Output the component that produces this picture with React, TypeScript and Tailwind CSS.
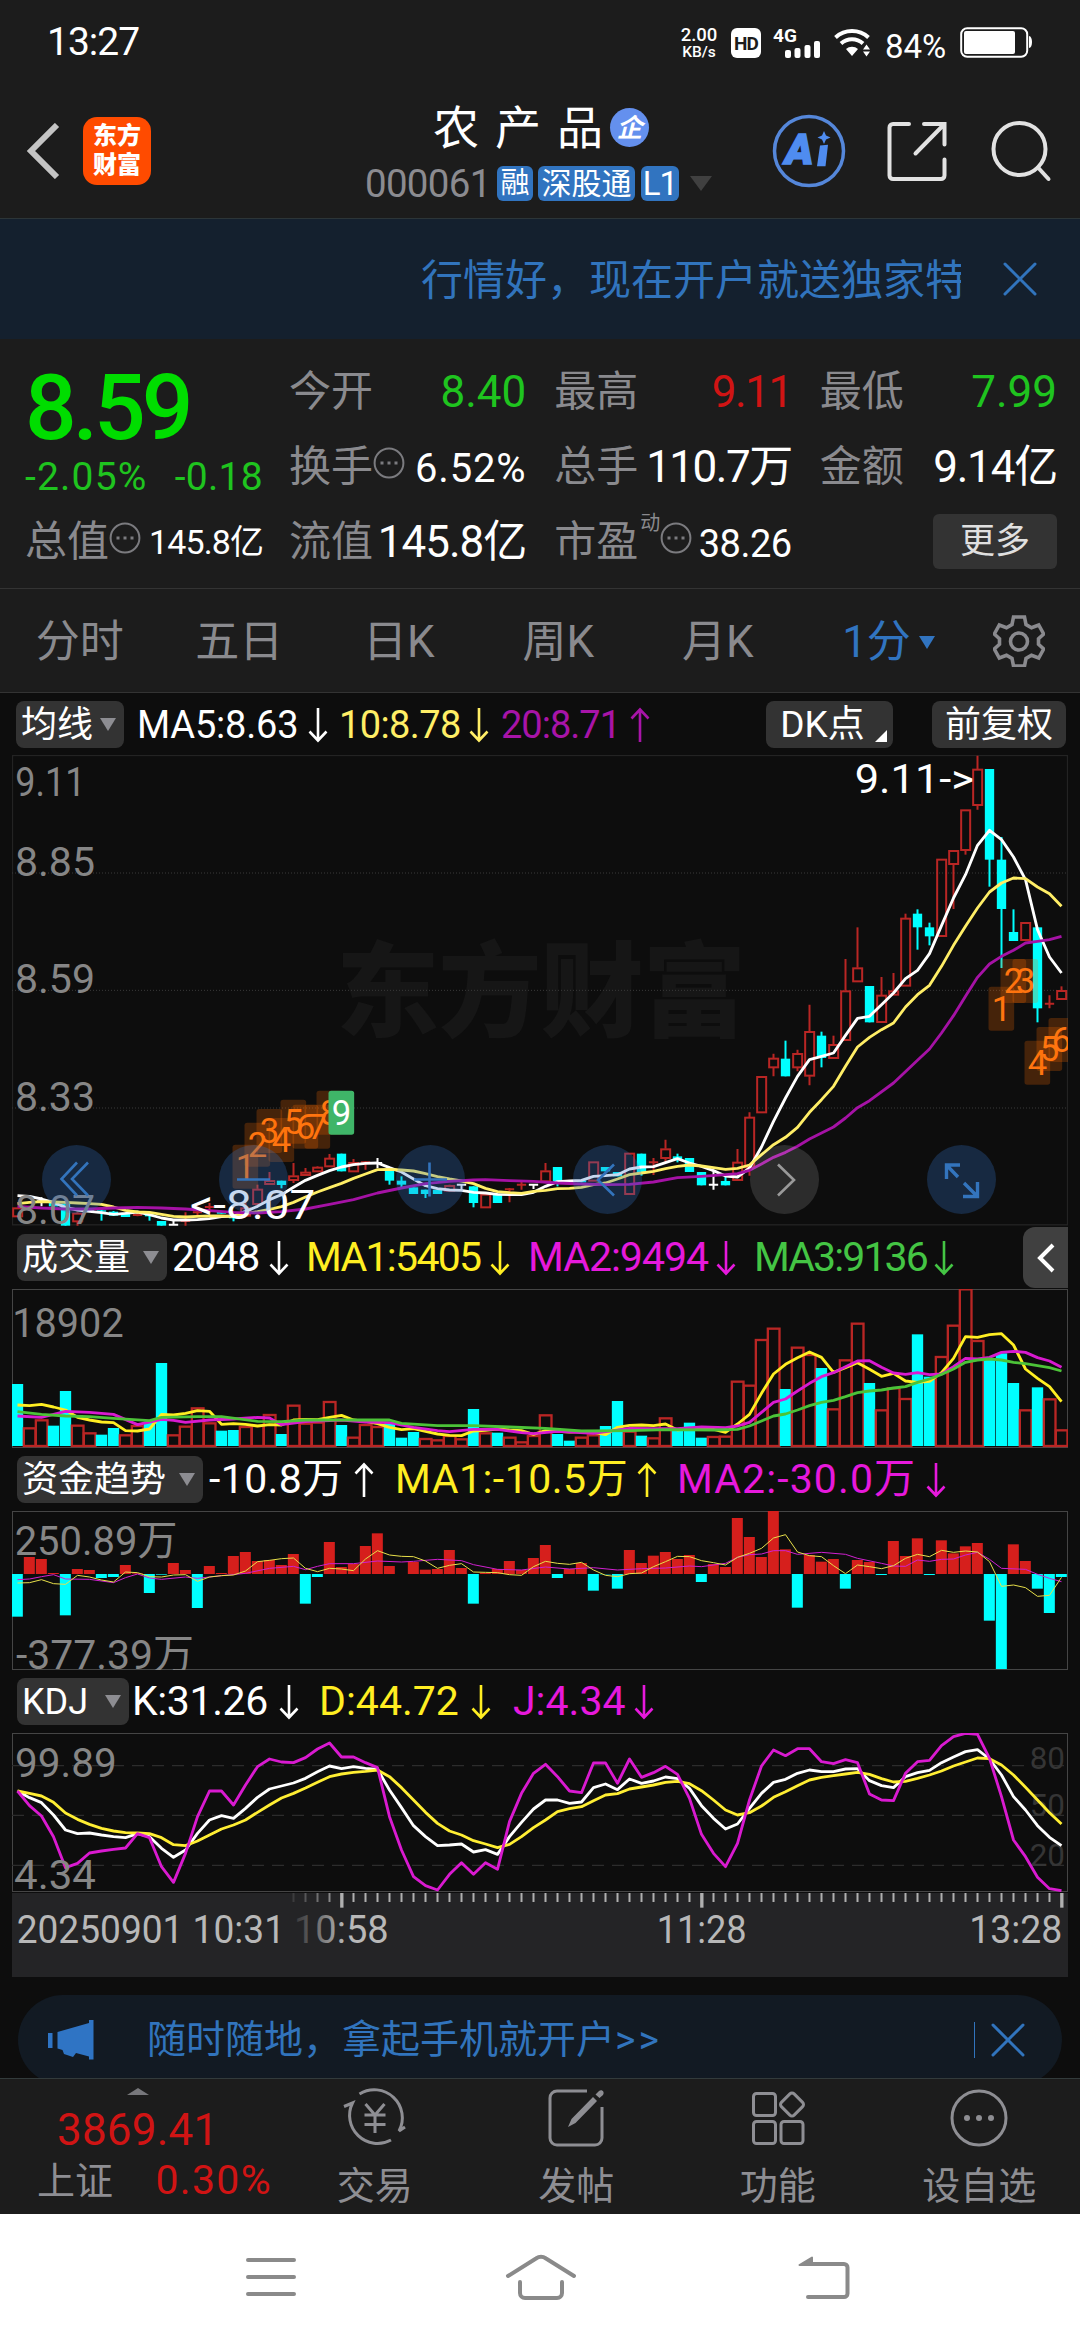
import { ReactNode } from 'react'
import clsx from 'clsx'

type Kind = 'up' | 'down' | 'flat'
type Candle = [kind: Kind, high: number, top: number, bottom: number, low: number]
type Point = [index: number, y: number]

// Every chart is drawn in a 3x space: one bar takes 36 units, 88 bars in total
const STEP = 36
const WIDTH = 3168
const cx = (i: number) => 16.5 + i * STEP

const UP = '#b92624'
const DOWN = '#00ffff'

const candles: Candle[] = [
  ['up', 1404, 1404, 1432, 1432], ['up', 1398, 1405, 1405, 1414], ['flat', 1373, 1385, 1385, 1400], ['down', 1385, 1388, 1400, 1400],
  ['down', 1390, 1392, 1458, 1458], ['up', 1418, 1420, 1447, 1458], ['down', 1410, 1412, 1416, 1416], ['down', 1408, 1412, 1416, 1443],
  ['down', 1414, 1416, 1428, 1428], ['down', 1418, 1420, 1432, 1432], ['up', 1420, 1426, 1426, 1430], ['down', 1420, 1424, 1430, 1443],
  ['down', 1444, 1444, 1458, 1458], ['flat', 1438, 1455, 1455, 1458], ['up', 1418, 1444, 1444, 1458], ['up', 1405, 1418, 1418, 1430],
  ['up', 1390, 1402, 1402, 1420], ['down', 1414, 1416, 1422, 1422], ['down', 1428, 1430, 1436, 1445], ['up', 1390, 1404, 1430, 1430],
  ['up', 1335, 1348, 1395, 1395], ['up', 1297, 1322, 1335, 1335], ['down', 1323, 1323, 1336, 1346], ['up', 1270, 1308, 1323, 1330],
  ['up', 1285, 1297, 1308, 1308], ['up', 1280, 1282, 1297, 1297], ['up', 1243, 1255, 1282, 1282], ['down', 1242, 1242, 1295, 1295],
  ['up', 1258, 1268, 1297, 1297], ['up', 1264, 1268, 1268, 1290], ['flat', 1255, 1270, 1270, 1285], ['down', 1293, 1293, 1323, 1335],
  ['down', 1310, 1323, 1335, 1348], ['down', 1343, 1343, 1363, 1363], ['down', 1350, 1350, 1363, 1375], ['down', 1350, 1350, 1363, 1363],
  ['up', 1335, 1337, 1355, 1355], ['flat', 1333, 1335, 1335, 1350], ['down', 1340, 1340, 1390, 1403], ['up', 1363, 1363, 1405, 1405],
  ['down', 1363, 1363, 1390, 1390], ['up', 1345, 1349, 1349, 1388], ['up', 1325, 1335, 1335, 1350], ['flat', 1333, 1335, 1335, 1348],
  ['up', 1270, 1293, 1327, 1327], ['down', 1282, 1282, 1325, 1340], ['down', 1322, 1322, 1328, 1328], ['down', 1322, 1322, 1328, 1328],
  ['up', 1266, 1266, 1325, 1325], ['down', 1282, 1282, 1295, 1295], ['down', 1297, 1297, 1310, 1310], ['up', 1240, 1240, 1365, 1365],
  ['down', 1242, 1242, 1300, 1308], ['up', 1255, 1268, 1268, 1306], ['up', 1200, 1227, 1257, 1268], ['down', 1242, 1250, 1258, 1268],
  ['down', 1255, 1255, 1297, 1297], ['down', 1297, 1297, 1337, 1337], ['flat', 1295, 1335, 1335, 1350], ['down', 1310, 1324, 1337, 1337],
  ['up', 1228, 1267, 1323, 1323], ['up', 1118, 1132, 1285, 1308], ['up', 1010, 1010, 1120, 1120], ['up', 942, 955, 985, 1010],
  ['down', 903, 957, 1010, 1010], ['up', 930, 941, 985, 995], ['up', 795, 875, 1010, 1037], ['down', 876, 888, 955, 983],
  ['up', 888, 914, 957, 957], ['up', 658, 753, 903, 903], ['up', 563, 684, 727, 727], ['down', 739, 739, 848, 848],
  ['up', 712, 766, 849, 849], ['up', 700, 753, 767, 767], ['up', 522, 535, 740, 740], ['down', 509, 522, 563, 630],
  ['down', 549, 563, 590, 617], ['up', 358, 358, 591, 591], ['up', 332, 332, 375, 508], ['up', 210, 210, 333, 345],
  ['up', 48, 88, 198, 210], ['down', 88, 88, 360, 441], ['down', 292, 360, 508, 685], ['down', 509, 577, 604, 604],
  ['up', 548, 548, 603, 603], ['down', 563, 563, 806, 848], ['up', 767, 792, 792, 806], ['up', 740, 752, 780, 780],
]

const ma5 = [
  1368, 1370, 1378, 1388, 1403, 1411, 1415, 1419, 1424, 1421, 1417, 1425, 1435, 1441, 1441, 1440, 1437, 1431, 1429, 1415, 1400, 1380,
  1365, 1343, 1322, 1307, 1293, 1282, 1275, 1271, 1270, 1284, 1297, 1318, 1338, 1347, 1351, 1352, 1358, 1360, 1364, 1365, 1365, 1358,
  1340, 1326, 1324, 1322, 1310, 1308, 1305, 1288, 1282, 1281, 1269, 1257, 1270, 1280, 1293, 1309, 1312, 1285, 1222, 1145, 1075, 1010,
  960, 950, 940, 887, 836, 830, 795, 760, 717, 692, 642, 558, 475, 405, 317, 272, 300, 352, 420, 570, 652, 700,
]
const ma10 = [
  1392, 1388, 1386, 1387, 1388, 1390, 1392, 1394, 1402, 1412, 1417, 1418, 1424, 1430, 1432, 1430, 1429, 1429, 1430, 1422, 1416, 1409,
  1401, 1388, 1372, 1357, 1344, 1331, 1316, 1303, 1290, 1289, 1291, 1294, 1302, 1311, 1318, 1324, 1332, 1346, 1356, 1359, 1361, 1355,
  1352, 1347, 1346, 1343, 1335, 1330, 1318, 1305, 1300, 1295, 1287, 1280, 1276, 1279, 1284, 1289, 1286, 1276, 1245, 1215, 1193, 1163,
  1118, 1080, 1040, 980, 922, 893, 870, 850, 802, 765, 737, 680, 617, 560, 505, 457, 430, 415, 417, 442, 462, 500,
]
const ma20: Point[] = [
  [0, 1400], [2, 1405], [4, 1408], [6, 1408], [8, 1405], [10, 1403], [12, 1405], [14, 1408], [16, 1413], [18, 1418], [20, 1420],
  [22, 1416], [24, 1408], [26, 1394], [28, 1380], [30, 1360], [32, 1345], [34, 1332], [36, 1325], [38, 1321], [39, 1320], [41, 1323],
  [43, 1325], [45, 1330], [47, 1333], [49, 1335], [51, 1334], [53, 1327], [55, 1314], [57, 1310], [59, 1305], [60, 1302], [61, 1292],
  [62, 1273], [63, 1253], [64, 1238], [65, 1220], [66, 1198], [68, 1162], [69, 1135], [70, 1104], [71, 1083], [73, 1030], [75, 962],
  [76, 928], [77, 880], [78, 828], [79, 770], [80, 713], [81, 673], [82, 650], [83, 632], [84, 610], [85, 605], [86, 600], [87, 590],
]

// [bar index, box top, digit]
const turns: [number, number, number][] = [
  [19, 1215, 1], [20, 1149, 2], [21, 1108, 3], [22, 1135, 4], [23, 1080, 5], [24, 1095, 6], [25, 1095, 7], [26, 1053, 8], [27, 1053, 9],
  [82, 741, 1], [83, 658, 2], [84, 658, 3], [85, 903, 4], [86, 862, 5], [87, 835, 6],
]

const volumes = [
  492, 622, 598, 617, 513, 614, 637, 644, 624, 643, 615, 605, 429, 643, 617, 562, 607, 632, 630, 618, 615, 582, 642, 554, 608, 605, 543,
  615, 650, 612, 618, 610, 653, 636, 654, 658, 645, 655, 567, 637, 638, 650, 664, 645, 583, 642, 662, 650, 643, 618, 543, 632, 647, 652,
  592, 632, 608, 653, 648, 647, 482, 494, 357, 323, 507, 380, 402, 444, 565, 418, 308, 489, 568, 502, 534, 343, 470, 408, 314, 205, 360,
  415, 400, 489, 568, 502, 535, 628,
]
const volumeDown = new Set([0, 3, 4, 7, 8, 11, 12, 17, 18, 22, 27, 31, 32, 33, 38, 40, 45, 46, 49, 50, 52, 55, 56, 57, 64, 67, 71, 75, 76, 81, 82, 83, 85])
const volMa1 = [
  555, 557, 553, 561, 570, 592, 600, 606, 608, 632, 633, 627, 583, 585, 580, 572, 574, 613, 611, 613, 618, 614, 615, 600, 598, 599, 592,
  586, 600, 604, 611, 622, 629, 626, 634, 642, 646, 647, 633, 631, 627, 630, 632, 643, 632, 634, 636, 635, 637, 644, 622, 616, 615, 617,
  612, 630, 625, 624, 628, 637, 612, 583, 520, 462, 433, 413, 396, 412, 457, 443, 428, 448, 469, 460, 483, 487, 484, 458, 415, 350, 352,
  344, 341, 375, 447, 475, 500, 545,
]
const volMa2: Point[] = [
  [0, 588], [2, 592], [3, 583], [4, 574], [6, 577], [8, 583], [10, 614], [11, 606], [12, 598], [13, 601], [14, 607], [16, 600], [18, 597],
  [20, 592], [21, 594], [22, 614], [24, 605], [27, 600], [29, 606], [31, 608], [33, 622], [35, 632], [36, 635], [38, 628], [40, 628],
  [42, 638], [43, 641], [45, 634], [48, 640], [51, 625], [53, 626], [55, 626], [57, 621], [59, 623], [60, 618], [61, 607], [62, 577],
  [63, 547], [64, 537], [65, 513], [66, 490], [67, 470], [68, 458], [69, 440], [70, 423], [71, 422], [72, 442], [73, 459], [74, 463],
  [75, 458], [76, 464], [77, 462], [78, 440], [79, 415], [80, 417], [81, 412], [82, 397], [83, 394], [84, 397], [85, 413], [86, 423], [87, 442],
]
const volMa3: Point[] = [
  [0, 575], [2, 583], [4, 588], [6, 590], [8, 595], [11, 602], [12, 592], [15, 590], [17, 590], [20, 604], [22, 605], [24, 600], [27, 600],
  [31, 600], [32, 610], [35, 617], [38, 617], [41, 621], [44, 625], [47, 633], [51, 632], [54, 629], [58, 630], [60, 628], [61, 618],
  [62, 603], [63, 588], [64, 582], [65, 570], [66, 557], [67, 547], [68, 541], [69, 530], [70, 518], [71, 513], [72, 510], [73, 504],
  [74, 500], [75, 487], [76, 477], [77, 463], [78, 447], [79, 427], [80, 420], [81, 417], [82, 420], [83, 427], [84, 431], [85, 437], [86, 443], [87, 453],
]

const funds = [
  1190, 1011, 1017, 1059, 1186, 1047, 1050, 1074, 1071, 1035, 1060, 1119, 1064, 1029, 1050, 1164, 1038, 1059, 1008, 996, 1023, 1020, 1035,
  1002, 1151, 1071, 966, 1041, 1032, 978, 940, 1038, 1062, 1026, 1049, 1047, 990, 1044, 1151, 1059, 1047, 1023, 1050, 1014, 975, 1074,
  1047, 1029, 1112, 1063, 1106, 990, 1029, 1007, 996, 1017, 1005, 1086, 1032, 1041, 894, 951, 1011, 873, 988, 1163, 1005, 1025, 1017,
  1106, 1020, 1026, 1065, 963, 1008, 955, 1065, 961, 1000, 979, 969, 1202, 1347, 973, 1023, 1106, 1179, 1071,
]
const fundMa1 = [
  1089, 1088, 1079, 1091, 1093, 1066, 1071, 1080, 1086, 1056, 1058, 1070, 1071, 1065, 1064, 1084, 1071, 1067, 1065, 1053, 1025, 1021, 1016,
  1014, 1045, 1055, 1045, 1047, 1052, 1017, 992, 1005, 1009, 1010, 1023, 1045, 1036, 1031, 1056, 1057, 1058, 1064, 1066, 1040, 1024, 1030,
  1033, 1027, 1050, 1066, 1070, 1061, 1059, 1040, 1025, 1009, 1010, 1022, 1028, 1035, 1012, 1000, 985, 954, 944, 996, 1007, 1010, 1037,
  1061, 1035, 1040, 1046, 1037, 1015, 1003, 1010, 991, 997, 993, 996, 1025, 1099, 1095, 1103, 1129, 1126, 1072,
]
const fundMa2: Point[] = [
  [0, 1079], [1, 1077], [2, 1070], [3, 1064], [4, 1077], [6, 1078], [8, 1088], [9, 1073], [10, 1062], [11, 1074], [12, 1078], [14, 1071],
  [15, 1075], [17, 1067], [19, 1060], [21, 1045], [23, 1039], [24, 1049], [25, 1039], [26, 1031], [28, 1031], [30, 1023], [32, 1026],
  [33, 1024], [35, 1018], [37, 1022], [38, 1034], [40, 1048], [42, 1050], [44, 1041], [46, 1047], [48, 1043], [50, 1050], [52, 1046],
  [54, 1044], [56, 1038], [57, 1040], [59, 1030], [60, 1012], [61, 1004], [62, 1002], [63, 992], [64, 992], [65, 1003], [67, 997],
  [69, 1003], [70, 1015], [72, 1030], [73, 1038], [74, 1039], [75, 1020], [76, 1024], [77, 1018], [78, 1017], [79, 1005], [80, 997],
  [81, 1018], [82, 1045], [84, 1048], [85, 1063], [86, 1075], [87, 1085],
]

const kLine = [
  393, 413, 428, 465, 510, 521, 519, 525, 530, 533, 521, 530, 565, 592, 570, 520, 480, 467, 475, 445, 412, 387, 378, 369, 355, 335, 318,
  326, 320, 325, 328, 390, 443, 497, 530, 557, 555, 552, 576, 569, 583, 530, 487, 447, 420, 420, 430, 426, 383, 372, 389, 357, 370, 363,
  351, 356, 385, 437, 475, 507, 492, 445, 400, 367, 358, 340, 330, 335, 335, 327, 326, 362, 377, 383, 350, 338, 331, 308, 291, 275, 269,
  297, 345, 410, 450, 497, 532, 557,
]
const dLine = [
  393, 400, 408, 427, 459, 478, 493, 505, 513, 518, 519, 521, 533, 554, 557, 543, 525, 507, 495, 480, 457, 435, 414, 400, 384, 367, 350,
  342, 337, 334, 330, 350, 383, 420, 457, 490, 513, 525, 542, 552, 563, 553, 530, 503, 480, 455, 446, 440, 422, 405, 401, 387, 381, 375,
  367, 364, 371, 392, 420, 450, 465, 458, 438, 412, 395, 377, 360, 352, 347, 342, 337, 343, 356, 366, 364, 355, 345, 333, 318, 306, 294,
  296, 315, 345, 382, 420, 458, 492,
]
const jLine = [
  393, 437, 468, 530, 623, 610, 579, 573, 568, 564, 521, 533, 620, 667, 580, 470, 393, 393, 435, 375, 320, 297, 306, 308, 293, 267, 249,
  291, 291, 308, 323, 470, 570, 650, 677, 690, 643, 608, 643, 608, 628, 485, 400, 340, 313, 350, 393, 398, 309, 309, 370, 297, 352, 338,
  319, 343, 415, 523, 580, 620, 550, 420, 318, 270, 287, 266, 266, 305, 311, 299, 308, 402, 420, 422, 340, 305, 301, 257, 230, 220, 223,
  295, 410, 540, 590, 652, 686, 692,
]

interface LineProps {
  data: number[] | Point[]
  color: string
  width?: number
}

const Line = ({ data, color, width = 8.5 }: LineProps) => (
  <polyline
    points={data.map((d, i) => (typeof d === 'number' ? `${cx(i)},${d}` : `${cx(d[0])},${d[1]}`)).join(' ')}
    fill="none"
    stroke={color}
    strokeWidth={width}
    strokeLinejoin="round"
  />
)

interface LabelProps {
  x: number
  y: number
  w: number
  size?: number
  fill?: string
  children: string
}

const Label = ({ x, y, w, size = 123, fill = '#868686', children }: LabelProps) => (
  <text x={x} y={y} fontSize={size} fill={fill} textLength={w} lengthAdjust="spacingAndGlyphs">
    {children}
  </text>
)

const Arrow = ({ up }: { up?: boolean }) => (
  <svg viewBox="0 0 20 36" className={clsx('h-9 w-5 shrink-0', up && 'rotate-180')} fill="none" stroke="currentColor" strokeWidth="2.6">
    <path d="M10 1v32M1.5 24.5L10 33.5l8.5-9" />
  </svg>
)

const Triangle = ({ className = 'h-[13px] w-4' }: { className?: string }) => (
  <svg viewBox="0 0 16 13" preserveAspectRatio="none" className={className} fill="currentColor">
    <path d="M0 0h16L8 13z" />
  </svg>
)

const Close = () => (
  <svg viewBox="0 0 34 34" className="size-[34px] shrink-0" fill="none" stroke="currentColor" strokeWidth="3" strokeLinecap="round">
    <path d="M2 2l30 30M32 2L2 32" />
  </svg>
)

const Dots = () => (
  <svg viewBox="0 0 32 32" className="size-8 shrink-0 text-[#7b7b7f]" fill="none" stroke="currentColor" strokeWidth="2">
    <circle cx="16" cy="16" r="14.4" />
    <path d="M7.5 16h3M14.5 16h3M21.5 16h3" strokeWidth="3" />
  </svg>
)

const StatusBar = () => (
  <div className="flex h-[84px] items-start text-white">
    <span className="ml-[47px] mt-[23px] w-[633px] text-[39px] leading-[38px] tracking-[-1px]">13:27</span>
    <div className="mt-[26px] flex w-[38px] flex-col items-center font-medium leading-none">
      <span className="text-[18.5px]">2.00</span>
      <span className="text-[15.5px]">KB/s</span>
    </div>
    <span className="ml-[13px] mt-[28px] flex h-[30px] w-[30px] items-center justify-center rounded-[6px] bg-white text-[19px] font-bold leading-none tracking-[-1px] text-[#1c1c1c]">
      HD
    </span>
    <div className="relative ml-[12px] mt-[28px] h-[30px] w-[48px]">
      <span className="absolute -top-px left-0 text-[19px] font-bold leading-[18px]">4G</span>
      <svg viewBox="0 0 36 17" className="absolute bottom-0 left-[12px] h-[17px] w-9" fill="currentColor">
        <rect y="9" width="6" height="8" rx="2" />
        <rect x="9.5" y="7" width="6" height="10" rx="2" />
        <rect x="19.5" y="4" width="6" height="13" rx="2" />
        <rect x="29" width="6" height="17" rx="2" />
      </svg>
    </div>
    <svg viewBox="0 0 38 29" className="ml-[13px] mt-[28px] h-[29px] w-[38px]" fill="none" stroke="currentColor" strokeWidth="4">
      <path d="M1.5 9.5a24.5 24.5 0 0 1 33 0M7 15.5a16.5 16.5 0 0 1 22 0" />
      <path d="M12 21a9 9 0 0 1 12 0l-6 7z" fill="currentColor" stroke="none" />
      <path d="M29 21.5l3.500-5 3.500 5zM29 23.500l3.500 5 3.500-5z" fill="currentColor" stroke="none" />
    </svg>
    <span className="ml-[13px] mt-[31px] w-[65px] text-[33px] leading-[32px]">84%</span>
    <svg viewBox="0 0 74 32" className="ml-[10px] mt-[26px] h-8 w-[74px]">
      <rect x="1.2" y="2.2" width="66" height="28.5" rx="6" fill="none" stroke="#fff" strokeWidth="2" />
      <rect x="4" y="5" width="51" height="23" rx="2" fill="#fff" />
      <path d="M69 10c4 0 4 12 0 12z" fill="#fff" />
    </svg>
  </div>
)

const Header = () => (
  <header className="flex h-[135px] items-center border-b border-[#2c3538]">
    <div className="flex w-[365px] items-center pl-[26px]">
      <svg viewBox="0 0 34 56" className="h-14 w-[34px]" fill="none" stroke="#c4c4c4" strokeWidth="6">
        <path d="M31 2L5 28l26 26" />
      </svg>
      <div className="ml-[23px] flex size-[68px] flex-col items-center justify-center rounded-[14px] bg-[#ff4b00] text-[24px] font-black leading-[29px] text-white">
        <span>东方</span>
        <span>财富</span>
      </div>
    </div>
    <div className="flex w-[348px] flex-col items-center">
      <div className="flex h-[54px] items-center">
        <span className="ml-[4px] text-[46px] leading-[54px] tracking-[16px] text-white">农产品</span>
        <span className="-ml-[9px] flex size-[39px] items-center justify-center rounded-full bg-[#6490ee] text-[26px] font-bold italic leading-none text-white">企</span>
      </div>
      <div className="mt-[11px] flex w-full items-center text-[#8b8b90]">
        <span className="w-[132px] text-[38.5px] leading-[36px] tracking-[-0.7px]">000061</span>
        <span className="flex h-[35px] w-9 items-center justify-center rounded-[6px] bg-[#3174c0] text-[29px] leading-none text-white">融</span>
        <span className="ml-[5px] flex h-[35px] w-[97px] items-center justify-center rounded-[6px] bg-[#3174c0] text-[30px] leading-none text-white">深股通</span>
        <span className="ml-[6px] flex h-[35px] w-[38px] items-center justify-center rounded-[6px] bg-[#3174c0] text-[33px] leading-none tracking-[-1px] text-white">L1</span>
        <Triangle className="ml-[11px] h-[15px] w-[22px] text-[#404040]" />
      </div>
    </div>
    <div className="flex items-center pl-[59px] text-[#e2e2e2]">
      <svg viewBox="0 0 74 74" className="size-[74px]" fill="none">
        <circle cx="37" cy="37" r="34.5" stroke="#5587da" strokeWidth="3.5" />
        <text x="13" y="50" fontSize="43" fontWeight="900" fontStyle="italic" fill="#4f8cf0" stroke="#4f8cf0" strokeWidth="1.5">A</text>
        <path d="M48 31.5l8-.8-2.500 21.500h-8.500zM52 17l2 4.500 4.500 2-4.500 2-2 4.500-2-4.500-4.500-2 4.500-2z" fill="#4f8cf0" />
      </svg>
      <svg viewBox="0 0 60 60" className="ml-[41px] size-[60px]" fill="none" stroke="currentColor" strokeWidth="4" strokeLinecap="round">
        <path d="M22 3H6a3.5 3.5 0 0 0-3.5 3.5v48A3.5 3.5 0 0 0 6 58h48a3.5 3.5 0 0 0 3.5-3.5V38.500M37 3h20.500v20.500M57 3.500L28.500 32.500" />
      </svg>
      <svg viewBox="0 0 62 62" className="ml-[43px] size-[62px]" fill="none" stroke="currentColor" strokeWidth="4" strokeLinecap="round">
        <circle cx="29.5" cy="29" r="26" />
        <path d="M48 47.5L58.5 59" />
      </svg>
    </div>
  </header>
)

interface StatProps {
  label: string
  sup?: string
  dots?: boolean
  color?: string
  children: ReactNode
}

const Stat = ({ label, sup, dots, color = 'text-white', children }: StatProps) => (
  <div className="flex h-[75px] items-center justify-between whitespace-nowrap">
    <div className="flex items-center text-[42px] leading-none text-[#8a8a8e]">
      {label}
      {sup && <span className="ml-[2px] -mt-2 self-start text-[20px] leading-none">{sup}</span>}
      {dots && <span className="-mt-2"><Dots /></span>}
    </div>
    <span className={clsx('leading-none', color)}>{children}</span>
  </div>
)

const Quote = () => (
  <section className="flex h-[250px] border-b border-[#333] pl-[25px]">
    <div className="w-[238px] pt-[15px]">
      <div className="mt-[9px] text-[91px] font-medium leading-[91px] tracking-[-4px] text-[#00dd00]">8.59</div>
      <div className="mt-[6px] flex h-[34px] items-center justify-between text-[39px] leading-none text-[#1fc41f]">
        <span className="tracking-[1.2px]">-2.05%</span>
        <span className="tracking-[0.3px]">-0.18</span>
      </div>
      <div className="mt-[10px]">
        <Stat label="总值" dots>
          <span className="text-[34px] tracking-[-0.9px]">145.8亿</span>
        </Stat>
      </div>
    </div>
    <div className="ml-[26px] grid w-[768px] shrink-0 auto-rows-[75px] grid-cols-3 gap-x-[28px] pt-[15px] text-[44px]">
      <Stat label="今开" color="text-[#1fc41f]">8.40</Stat>
      <Stat label="最高" color="text-[#d01414]">
        <span className="tracking-[-1.5px]">9.11</span>
      </Stat>
      <Stat label="最低" color="text-[#1fc41f]">7.99</Stat>
      <Stat label="换手" dots>
        <span className="text-[40px] tracking-[0.8px]">6.52%</span>
      </Stat>
      <Stat label="总手">
        <span className="tracking-[-1.5px]">110.7万</span>
      </Stat>
      <Stat label="金额">
        <span className="tracking-[-1.2px]">9.14亿</span>
      </Stat>
      <Stat label="流值">
        <span className="tracking-[-1px]">145.8亿</span>
      </Stat>
      <Stat label="市盈" sup="动" dots>
        <span className="text-[38px] tracking-[-0.5px]">38.26</span>
      </Stat>
      <div className="flex h-[75px] items-center justify-end">
        <button className="h-[55px] w-[124px] rounded-[6px] bg-[#333] text-[35px] leading-none text-[#e0e0e0]">更多</button>
      </div>
    </div>
  </section>
)

const Tabs = () => (
  <nav className="flex h-[104px] items-center border-b border-[#333] text-[44px] leading-none text-[#8a8a8e]">
    {['分时', '五日', '日K', '周K', '月K'].map((tab) => (
      <span key={tab} className="w-[159.5px] pt-[3px] text-center">{tab}</span>
    ))}
    <span className="flex w-[182px] items-center justify-center pt-[3px] text-[#3174c0]">
      1分
      <Triangle className="ml-[8px] h-[13px] w-4" />
    </span>
    <svg viewBox="0 0 52 52" className="ml-[13px] size-[52px]" fill="none" stroke="currentColor" strokeWidth="3.6">
      <path d="M20.5 2h11l1.5 7.5 5.5 3.2 7.2-2.7 5 9-5.2 4.700v5.600l5.200 4.700-5 9-7.200-2.700-5.500 3.200-1.500 7.500h-11L19 43.500l-5.500-3.200L6.300 43l-5-9 5.200-4.700v-5.600L1.300 19l5-9 7.200 2.700L19 9.500z" />
      <circle cx="26" cy="26.5" r="8.5" />
    </svg>
  </nav>
)

interface LegendItem {
  text: string
  up?: boolean
  color: string
  width: string
}

interface LegendProps {
  name: string
  button: string
  items: LegendItem[]
  className?: string
  children?: ReactNode
}

const Legend = ({ name, button, items, className = 'h-[63px] pl-[17px] text-[41px]', children }: LegendProps) => (
  <div className={clsx('flex items-center whitespace-nowrap leading-none', className)}>
    <button className={clsx('flex h-[47px] items-center justify-between rounded-[8px] bg-[#333] pl-[5px] pr-[8px] text-[36px] leading-none tracking-normal text-white', button)}>
      {name}
      <Triangle className="h-[13px] w-4 text-[#8d8d92]" />
    </button>
    {items.map((item) => (
      <span key={item.text} className={clsx('flex items-center justify-between', item.color, item.width)}>
        {item.text}
        <Arrow up={item.up} />
      </span>
    ))}
    {children}
  </div>
)

const PriceChart = () => (
  <div className="relative mx-[12px] h-[471px]">
    <svg viewBox={`0 46 ${WIDTH} 1413`} className="block h-[471px] w-[1056px]">
      <rect x="1.5" y="47.5" width={WIDTH - 3} height="1408" fill="none" stroke="#232323" strokeWidth="4" />
      <text x="972" y="868" fontSize="310" fontWeight="900" fill="#161616" textLength="1230">东方财富</text>
      {[400, 752, 1105].map((y) => (
        <line key={y} x1="0" x2={WIDTH} y1={y} y2={y} stroke="#3a3a3a" strokeWidth="3" strokeDasharray="3 6" />
      ))}
      {candles.map(([kind, high, top, bottom, low], i) => {
        const x = cx(i)
        const cross = top === bottom
        const color = kind === 'up' ? UP : kind === 'down' ? DOWN : '#fff'
        return (
          <g key={i} stroke={color} strokeWidth="6" fill="none">
            {cross ? (
              <path d={`M${x} ${high}V${low}M${x - 14} ${top}h28`} />
            ) : kind === 'down' ? (
              <>
                <path d={`M${x} ${high}V${low}`} />
                <rect x={x - 14} y={top} width="28" height={bottom - top} fill={color} stroke="none" />
              </>
            ) : (
              <>
                <path d={`M${x} ${high}V${top}M${x} ${bottom}V${low}`} />
                <rect x={x - 13} y={top + 2} width="27" height={bottom - top - 4} />
              </>
            )}
          </g>
        )
      })}
      <Line data={ma5} color="#ffffff" />
      <Line data={ma10} color="#ffee66" />
      <Line data={ma20} color="#a512a5" />
      {turns.map(([i, top, digit]) => (
        <g key={i}>
          <rect x={cx(i) - 39} y={top} width="77" height="132" rx="8" fill={digit === 9 ? '#3fb568' : '#ff6a00'} fillOpacity={digit === 9 ? 1 : 0.23} />
          <text x={cx(i)} y={top + 103} fontSize="104" textAnchor="middle" fill={digit === 9 ? '#fff' : '#ff7510'}>
            {digit}
          </text>
        </g>
      ))}
      <Label x={10} y={168} w={210}>9.11</Label>
      <Label x={9} y={408} w={240}>8.85</Label>
      <Label x={9} y={760} w={240}>8.59</Label>
      <Label x={9} y={1113} w={240}>8.33</Label>
      <Label x={9} y={1453} w={240}>8.07</Label>
      <Label x={534} y={1438} w={376} fill="#fff">&lt;-8.07</Label>
      <Label x={2528} y={161} w={358} fill="#fff">9.11-&gt;</Label>
    </svg>
    <div className="absolute bottom-[12px] left-[29.5px] flex gap-[108px] text-[#3374bd]">
      {[
        'M35 17.5L19.5 34 35 50.5M46 17.5L30 34 46 50.5',
        'M18 34.5h33',
        'M18 34.5h33M33.5 17.5v34',
        'M41 19.5L25 35l16 15.5',
      ].map((d) => (
        <button key={d} className="size-[69px] rounded-full bg-[#3174c8]/28">
          <svg viewBox="0 0 69 69" fill="none" stroke="currentColor" strokeWidth="2.6">
            <path d={d} />
          </svg>
        </button>
      ))}
      <button className="size-[69px] rounded-full bg-white/13 text-[#9a9a9a]">
        <svg viewBox="0 0 69 69" fill="none" stroke="currentColor" strokeWidth="2.6">
          <path d="M28 19.5L44 35 28 50.5" />
        </svg>
      </button>
      <button className="size-[69px] rounded-full bg-[#3174c8]/28">
        <svg viewBox="0 0 69 69" fill="none" stroke="currentColor" strokeWidth="3.4">
          <path d="M19.5 34V20H33M19.5 20L31 32M50.5 37v14.5H36M50.5 51.5L37 38" />
        </svg>
      </button>
    </div>
  </div>
)

const VolumeChart = () => (
  <svg viewBox={`0 207 ${WIDTH} 477`} className="mx-[12px] block h-[159px] w-[1056px]">
    <rect x="1.5" y="208.5" width={WIDTH - 3} height="474" fill="none" stroke="#454545" strokeWidth="3" />
    {volumes.map((y, i) =>
      volumeDown.has(i) ? (
        <rect key={i} x={cx(i) - 17} y={y} width="34" height={678 - y} fill={DOWN} />
      ) : (
        <rect key={i} x={cx(i) - 17} y={y + 3} width="35" height={678 - y - 3} fill="none" stroke={UP} strokeWidth="7" />
      ),
    )}
    <Line data={volMa1} color="#ffee22" />
    <Line data={volMa2} color="#d91ad0" />
    <Line data={volMa3} color="#4cc338" />
    <Label x={1} y={352} w={334}>18902</Label>
  </svg>
)

const FundChart = () => (
  <svg viewBox={`0 873 ${WIDTH} 477`} className="mx-[12px] block h-[159px] w-[1056px]">
    <rect x="1.5" y="874.5" width={WIDTH - 3} height="474" fill="none" stroke="#454545" strokeWidth="3" />
    <Label x={8} y={1004} w={488} size={122}>250.89万</Label>
    <Label x={12} y={1346} w={534} size={122}>-377.39万</Label>
    {funds.map((y, i) => (
      <rect key={i} x={cx(i) - 17} y={Math.min(y, 1062)} width="33" height={Math.abs(y - 1062)} fill={y > 1062 ? DOWN : '#d61f1c'} />
    ))}
    <Line data={fundMa2} color="#d020d0" width={3} />
    <Line data={fundMa1} color="#e8e04a" width={3} />
  </svg>
)

const KdjChart = () => (
  <svg viewBox={`0 219 ${WIDTH} 477`} className="mx-[12px] block h-[159px] w-[1056px]">
    <rect x="1.5" y="220.5" width={WIDTH - 3} height="474" fill="none" stroke="#454545" strokeWidth="3" />
    {[317, 466, 616].map((y) => (
      <line key={y} x1="0" x2={WIDTH} y1={y} y2={y} stroke="#2c2c2c" strokeWidth="4" strokeDasharray="36 24" />
    ))}
    <Label x={3053} y={327} w={106} size={94} fill="#353535">80</Label>
    <Label x={3053} y={469} w={106} size={94} fill="#353535">50</Label>
    <Label x={3053} y={619} w={106} size={94} fill="#353535">20</Label>
    <Line data={kLine} color="#ffffff" />
    <Line data={dLine} color="#ffee33" />
    <Line data={jLine} color="#d91ad0" />
    <Label x={9} y={351} w={305}>99.89</Label>
    <Label x={6} y={687} w={246}>4.34</Label>
  </svg>
)

const TimeAxis = () => (
  <svg viewBox={`0 699 ${WIDTH} 252`} className="mx-[12px] mt-px block h-[84px] w-[1056px] bg-[#242426]">
    <defs>
      <linearGradient id="fade" x1="810" x2="1000" gradientUnits="userSpaceOnUse">
        <stop offset="0" stopColor="#242426" />
        <stop offset="0.35" stopColor="#4c4c4e" />
        <stop offset="1" stopColor="#b8b8b8" />
      </linearGradient>
    </defs>
    {Array.from({ length: 65 }, (_, n) => n + 23).map((i) => {
      const major = i % 30 === 27
      return (
        <rect
          key={i}
          x={cx(i) - (major ? 4 : 3)}
          y="699"
          width={major ? 10 : 6}
          height={major ? 44 : 27}
          fill={i < 27 ? `rgba(184,184,184,${(i - 22) * 0.17})` : '#b0b0b0'}
        />
      )
    })}
    <Label x={14} y={850} w={805} size={115} fill="#b8b8b8">20250901 10:31</Label>
    <Label x={846} y={850} w={284} size={115} fill="url(#fade)">10:58</Label>
    <Label x={1934} y={850} w={270} size={115} fill="#b8b8b8">11:28</Label>
    <Label x={2872} y={850} w={279} size={115} fill="#b8b8b8">13:28</Label>
  </svg>
)

const Promo = () => (
  <div className="h-[101px] overflow-hidden pt-[18px]">
    <div className="mx-[18px] flex h-[90px] items-center rounded-full bg-[#121a23] pl-[30px] text-[#3174bd]">
      <svg viewBox="0 0 46 40" className="h-10 w-[46px]" fill="#2f74c4">
        <path d="M0 13h4.5v15H0zM9.5 12L41 3V0h4.5v39.5H41v-3L28 33l-3 4-9-3-1.5-4-5-1.5z" />
      </svg>
      <span className="ml-[53px] w-[827px] whitespace-nowrap text-[39px] leading-none">
        随时随地，拿起手机就开户<span className="tracking-[3px]">&gt;&gt;</span>
      </span>
      <span className="mr-[16px] h-9 w-px bg-[#3174bd]" />
      <Close />
    </div>
  </div>
)

const actions = [
  {
    label: '交易',
    icon: (
      <>
        <path d="M17.5 7A28 28 0 0 1 57 44l6-4M49 53A28 28 0 0 1 10.5 16L2 19.5" />
        <path d="M23.5 17L33 28l9.500-11M22.500 28h21M22.500 37.500h21M33 28v18" />
      </>
    ),
  },
  {
    label: '发帖',
    icon: (
      <>
        <path d="M44 4H14a7 7 0 0 0-7 7v40a7 7 0 0 0 7 7h38a7 7 0 0 0 7-7V20" />
        <path d="M25 40l3.5-8L50 10l4 4-21.5 22zM52.5 7.500l3.500-3.500c3-2 6 1 4 4L56.500 11z" fill="currentColor" stroke="none" />
      </>
    ),
  },
  {
    label: '功能',
    icon: (
      <>
        <rect x="8.5" y="6.5" width="22" height="22" rx="3" />
        <rect x="8.5" y="34.5" width="22" height="22" rx="3" />
        <rect x="36" y="34.5" width="22" height="22" rx="3" />
        <rect x="38" y="8.5" width="18" height="18" rx="3" transform="rotate(45 47 17.5)" />
      </>
    ),
  },
  {
    label: '设自选',
    icon: (
      <>
        <circle cx="33" cy="31" r="27" />
        <g fill="currentColor" stroke="none">
          <circle cx="21" cy="31" r="3" />
          <circle cx="33" cy="31" r="3" />
          <circle cx="45" cy="31" r="3" />
        </g>
      </>
    ),
  },
]

const BottomBar = () => (
  <footer className="flex h-[136px] border-t border-[#333b3b] bg-[#1c1c1c] text-[#8e8e93]">
    <div className="flex w-[274px] flex-col">
      <svg viewBox="0 0 22 7" className="ml-[127px] mt-[9px] h-[7px] w-[22px]" fill="#77777b">
        <path d="M11 0l11 7H0z" />
      </svg>
      <span className="ml-[57px] mt-[13px] text-[44px] leading-[44px] tracking-[0.2px] text-[#d01414]">3869.41</span>
      <div className="mt-[4px] flex items-baseline justify-between pl-[37px] pr-[2px] leading-[48px]">
        <span className="text-[38px]">上证</span>
        <span className="text-[41px] tracking-[1.3px] text-[#d01414]">0.30%</span>
      </div>
    </div>
    {actions.map(({ label, icon }) => (
      <button key={label} className="flex w-[201.5px] flex-col items-center pt-[8px]">
        <svg viewBox="0 0 66 62" className="h-[62px] w-[66px]" fill="none" stroke="currentColor" strokeWidth="3">
          {icon}
        </svg>
        <span className="mt-[17px] text-[38px] leading-[40px]">{label}</span>
      </button>
    ))}
  </footer>
)

const SystemNav = () => (
  <div className="flex h-[126px] items-center bg-white pl-[246px] text-[#8a8a8a]">
    <svg viewBox="0 0 50 40" className="h-10 w-[50px]" fill="none" stroke="currentColor" strokeWidth="4" strokeLinecap="round">
      <path d="M2 3h46M2 20h46M2 37h46" />
    </svg>
    <svg viewBox="0 0 72 46" className="ml-[209px] h-[46px] w-[72px]" fill="none" stroke="currentColor" strokeWidth="4" strokeLinecap="round">
      <path d="M3 22L31 4.5a9 9 0 0 1 10 0L69 22M15 28v11a5 5 0 0 0 5 5h32a5 5 0 0 0 5-5V28" />
    </svg>
    <svg viewBox="0 0 52 44" className="ml-[221px] h-[44px] w-[52px]" fill="none" stroke="currentColor" strokeWidth="4" strokeLinecap="round">
      <path d="M9 9h37a3.5 3.5 0 0 1 3.5 3.5v26A3.5 3.5 0 0 1 46 42H10" />
      <path d="M1.5 10L14 2.5V10z" fill="currentColor" strokeWidth="2" strokeLinejoin="round" />
    </svg>
  </div>
)

const App = () => (
  <div className="h-[2340px] w-[1080px] overflow-hidden bg-[#0d0d0d] font-[Roboto,'Noto_Sans_CJK_SC',sans-serif]">
    <div className="bg-[#1c1c1c]">
      <StatusBar />
      <Header />
      <div className="flex h-[120px] items-center bg-[#14202e] pl-[421px] text-[#3174bd]">
        <span className="w-[540px] overflow-hidden whitespace-nowrap pt-[4px] text-[42px] leading-[50px]">行情好，现在开户就送独家特</span>
        <span className="ml-[42px]"><Close /></span>
      </div>
      <Quote />
      <Tabs />
    </div>
    <Legend
      name="均线"
      button="w-[108px]"
      className="h-[62px] pl-[16px] pt-px text-[38px]"
      items={[
        { text: 'MA5:8.63', color: 'text-white', width: 'ml-[13px] w-[191px] tracking-[-0.2px]' },
        { text: '10:8.78', color: 'text-[#ffee66]', width: 'ml-[11px] w-[150px] tracking-[-0.6px]' },
        { text: '20:8.71', up: true, color: 'text-[#a814a8]', width: 'ml-[12px] w-[149px] tracking-[-1px]' },
      ]}
    >
      <button className="relative ml-[116px] h-[47px] w-[127px] rounded-[8px] bg-[#333] pr-[14px] text-[37px] leading-none text-white">
        DK点
        <svg viewBox="0 0 12 12" className="absolute bottom-[6px] right-[6px] size-3" fill="currentColor">
          <path d="M12 0v12H0z" />
        </svg>
      </button>
      <button className="ml-[39px] h-[47px] w-[134px] rounded-[8px] bg-[#333] text-[36px] leading-none text-white">前复权</button>
    </Legend>
    <PriceChart />
    <Legend
      name="成交量"
      button="w-[150px]"
      items={[
        { text: '2048', color: 'text-white', width: 'ml-[5px] w-[117px] tracking-[-1.3px]' },
        { text: 'MA1:5405', color: 'text-[#ffee22]', width: 'ml-[17px] w-[204px] tracking-[-1.7px]' },
        { text: 'MA2:9494', color: 'text-[#e619dc]', width: 'ml-[18px] w-[208px] tracking-[-1px]' },
        { text: 'MA3:9136', color: 'text-[#44c544]', width: 'ml-[18px] w-[200px] tracking-[-1.9px]' },
      ]}
    >
      <button className="ml-auto mr-[12px] flex h-[61px] w-[45px] items-center justify-center rounded-l-[12px] bg-[#404040] text-white">
        <svg viewBox="0 0 18 30" className="h-[30px] w-[18px]" fill="none" stroke="currentColor" strokeWidth="4">
          <path d="M16 2L3 15l13 13" />
        </svg>
      </button>
    </Legend>
    <VolumeChart />
    <Legend
      name="资金趋势"
      button="w-[186px]"
      items={[
        { text: '-10.8万', up: true, color: 'text-white', width: 'ml-[6px] w-[165px] tracking-[0.4px]' },
        { text: 'MA1:-10.5万', up: true, color: 'text-[#ffee22]', width: 'ml-[21px] w-[262px] tracking-[0.5px]' },
        { text: 'MA2:-30.0万', color: 'text-[#e619dc]', width: 'ml-[20px] w-[269px] tracking-[1.1px]' },
      ]}
    />
    <FundChart />
    <Legend
      name="KDJ"
      button="w-[112px]"
      items={[
        { text: 'K:31.26', color: 'text-white', width: 'ml-[3px] w-[167px] tracking-[-0.4px]' },
        { text: 'D:44.72', color: 'text-[#ffee22]', width: 'ml-[20px] w-[172px]' },
        { text: 'J:4.34', color: 'text-[#e619dc]', width: 'ml-[22px] w-[141px]' },
      ]}
    />
    <KdjChart />
    <TimeAxis />
    <Promo />
    <BottomBar />
    <SystemNav />
  </div>
)

export default App
